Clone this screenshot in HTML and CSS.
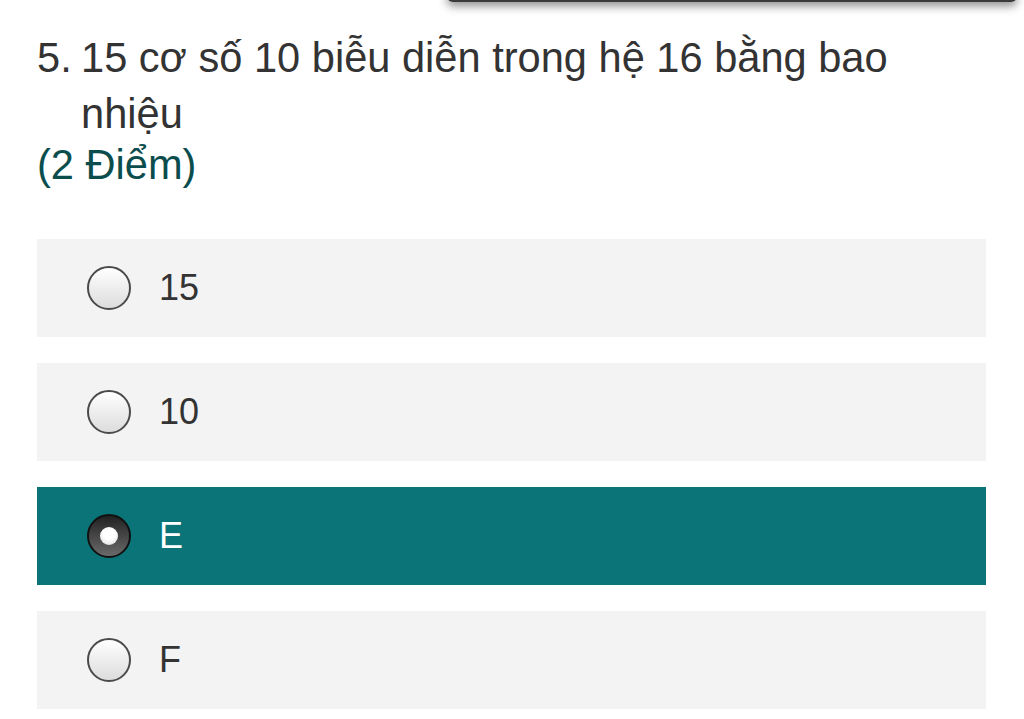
FILE: index.html
```html
<!DOCTYPE html>
<html lang="vi">
<head>
  <meta charset="UTF-8">
  <meta name="viewport" content="width=device-width, initial-scale=1.0">
  <title>Câu hỏi 5</title>
  <link rel="stylesheet" href="styles.css">
</head>
<body>
  <!-- Thanh trên cùng (chỉ thấy phần bóng) -->
  <div class="top-bar"></div>

  <main class="question">
    <div class="question-title">
      <span class="question-number">5.</span>
      <span class="question-text">15 cơ số 10 biễu diễn trong hệ 16 bằng bao nhiệu</span>
    </div>
    <div class="question-points">(2 Điểm)</div>

    <div class="choices" role="radiogroup">
      <label class="choice">
        <span class="radio"></span>
        <span class="choice-text">15</span>
      </label>
      <label class="choice">
        <span class="radio"></span>
        <span class="choice-text">10</span>
      </label>
      <label class="choice selected">
        <span class="radio"></span>
        <span class="choice-text">E</span>
      </label>
      <label class="choice">
        <span class="radio"></span>
        <span class="choice-text">F</span>
      </label>
    </div>
  </main>
</body>
</html>
```

FILE: styles.css
```css
/* Estilos básicos */
body {
  font-family: "Liberation Sans", Arial, sans-serif;
  margin: 0;
  padding: 0;
  background-color: #fff;
  color: #333;
}

.top-bar {
  position: absolute;
  top: -10px;
  left: 447px;
  width: 570px;
  height: 12px;
  background-color: #3a3a3a;
  border-radius: 0 0 6px 6px;
  box-shadow: 0 4px 10px rgba(0, 0, 0, 0.45);
}

.question {
  padding: 30px 38px 0 37px;
}

.question-title {
  display: flex;
  font-size: 41.6px;
  line-height: 56px;
}

.question-number {
  flex: none;
  width: 44px;
}

.question-points {
  font-size: 41.6px;
  line-height: 46px;
  color: #0b4d4d;
}

.choices {
  display: flex;
  flex-direction: column;
  gap: 26px;
  margin-top: 51px;
}

.choice {
  display: flex;
  align-items: center;
  gap: 28px;
  height: 98px;
  padding-left: 50px;
  background-color: #f3f3f3;
  font-size: 36px;
  color: #333;
}

.radio {
  width: 40px;
  height: 40px;
  border: 2px solid #4a4a4a;
  border-radius: 50%;
  background: linear-gradient(#ffffff, #dcdcdc);
  box-sizing: content-box;
}

.choice.selected {
  background-color: #0b7479;
  color: #fff;
}

.choice.selected .radio {
  position: relative;
  border-color: #111;
  background: linear-gradient(#222, #6a6a6a);
}

.choice.selected .radio::after {
  content: "";
  position: absolute;
  top: 11px;
  left: 11px;
  width: 18px;
  height: 18px;
  border-radius: 50%;
  background: radial-gradient(circle at 50% 35%, #fff 40%, #d6d6d6 100%);
}
```
